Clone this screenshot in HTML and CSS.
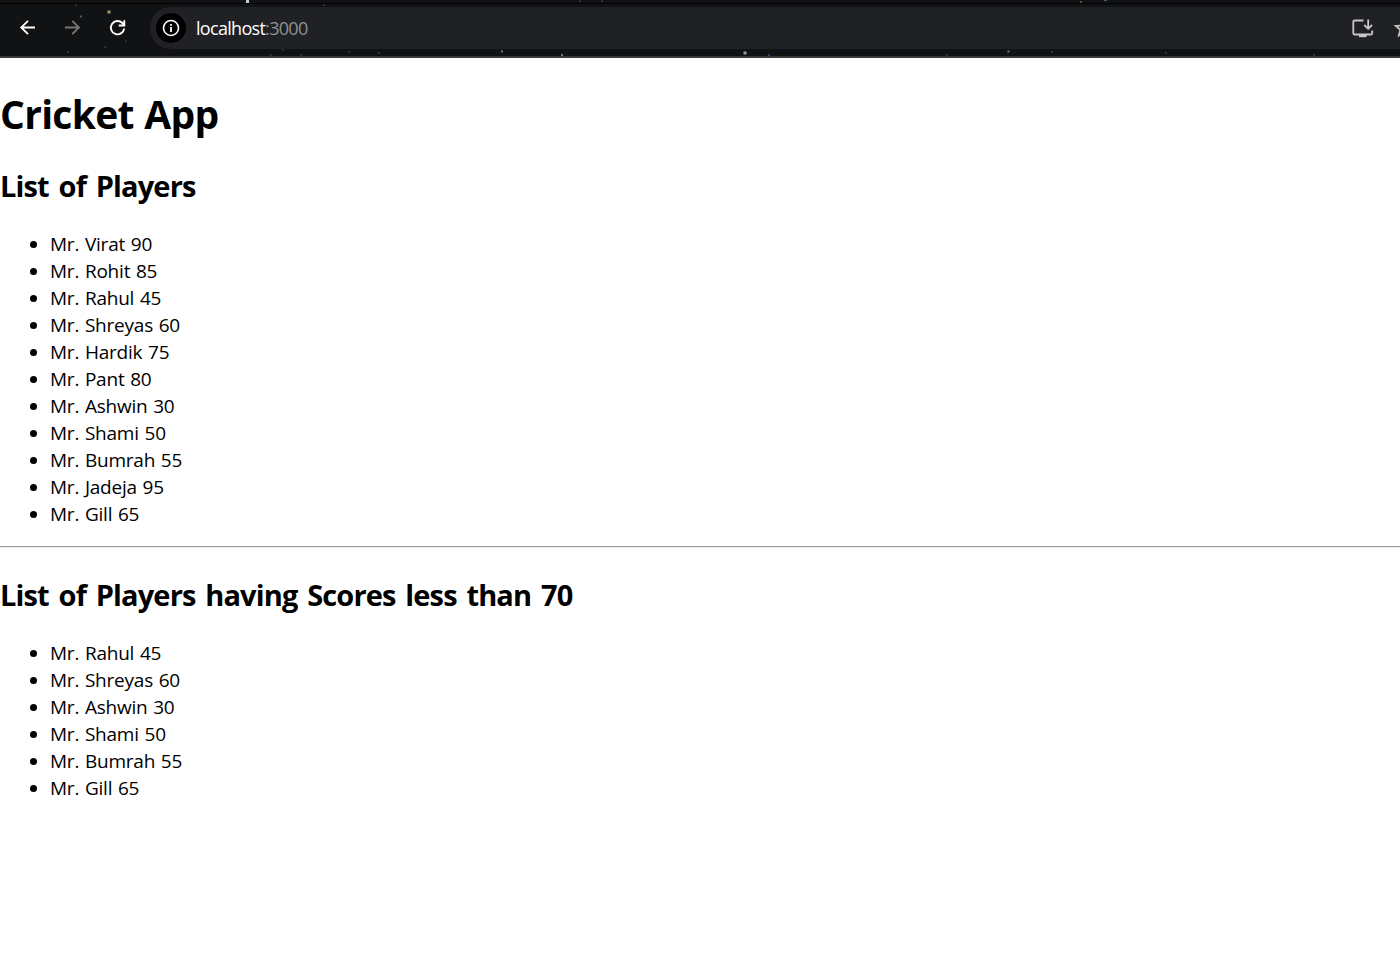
FILE: index.html
```html
<!DOCTYPE html>
<html lang="en">
<head>
<meta charset="utf-8">
<title>Cricket App</title>
<link rel="stylesheet" href="styles.css">
</head>
<body>
<header class="toolbar">
  <svg class="stars" width="1400" height="56" viewBox="0 0 1400 56" aria-hidden="true">
    <path d="M0 3.5H1400" stroke="#000"/>
    <path d="M246 0h3v3h-3z" fill="#c5cbd6"/>
    <path d="M107.500 10.500h3v3h-3z" fill="#a39c72"/>
    <path d="M80 15.500h2v2h-2z" fill="#505466"/>
    <path d="M75 4h2v2h-2zM125 40.500h2v2h-2zM67 51h2v2h-2zM104 46h2v2h-2zM323 4h2v2h-2zM579 0h2v2h-2zM601 0h2v2h-2zM282 49h2v2h-2zM270 54h2v2h-2zM300 54h2v2h-2zM348 51h2v2h-2zM378 52h2v2h-2zM1051 51h2v2h-2zM946 54h2v2h-2zM1165 52h2v2h-2zM1313 54h2v2h-2z" fill="#2e3133"/>
    <path d="M501 50.500h2v2h-2zM561 54h2v2h-2zM1007.500 50.500h2v2h-2z" fill="#70747c"/>
    <path d="M743.500 51.500h3v3h-3z" fill="#989ca7"/>
    <path d="M768 54.500h2v1.500h-2z" fill="#3e4880"/>
    <path d="M1080 1h2v2h-2z" fill="#63484a"/>
    <path d="M1104 0h3v1h-3z" fill="#555b75"/>
  </svg>
  <nav class="controls">
    <svg class="icon" width="24" height="24" viewBox="0 0 24 24"><path d="M20 11.500H6M13 4.800L6.200 11.500l6.800 6.700" fill="none" stroke="#fff" stroke-width="1.800"/></svg>
    <svg class="icon" width="24" height="24" viewBox="0 0 24 24"><path d="M5 11.500h14M12.200 4.800l6.800 6.700-6.800 6.700" fill="none" stroke="#777" stroke-width="1.800"/></svg>
    <svg class="icon" width="24" height="24" viewBox="0 0 24 24"><path d="M19.200 12.500A6.700 6.700 0 1 1 17.400 7L19.500 9M19.300 4.200V9.500H13.700" fill="none" stroke="#fff" stroke-width="1.900"/></svg>
  </nav>
  <div class="address">
    <span class="info"><svg class="icon" width="20" height="20" viewBox="0 0 20 20"><circle cx="10" cy="10" r="7.500" fill="none" stroke="#fff" stroke-width="1.600"/><path d="M10 9v5M10 6v1.800" stroke="#fff" stroke-width="1.800"/></svg></span>
    <span class="url">localhost<span class="port">:3000</span></span>
    <span class="actions">
      <svg class="icon" width="24" height="24" viewBox="0 0 24 24"><path d="M13.500 4.500H4.500a1.200 1.200 0 0 0-1.200 1.200v11.600a1.200 1.200 0 0 0 1.200 1.200h16.500a1.200 1.200 0 0 0 1.200-1.200v-2.800M18.200 3.500v9M14.300 9l3.900 3.800L22.100 9" fill="none" stroke="#c7c7c7" stroke-width="1.800"/><path d="M9 18h7.500v3.200H9z" fill="#c7c7c7"/></svg>
      <svg class="icon" width="24" height="24" viewBox="0 0 24 24"><path d="M12 4l2.300 5.400 5.900.5-4.500 3.800 1.400 5.700-5.100-3-5.100 3 1.400-5.700-4.500-3.800 5.900-.5z" fill="none" stroke="#c7c7c7" stroke-width="1.800"/></svg>
    </span>
  </div>
</header>
<main class="page">
  <h1 class="title">Cricket App</h1>
  <h2 class="heading">List of Players</h2>
  <ul class="players">
    <li>Mr. Virat 90</li>
    <li>Mr. Rohit 85</li>
    <li>Mr. Rahul 45</li>
    <li>Mr. Shreyas 60</li>
    <li>Mr. Hardik 75</li>
    <li>Mr. Pant 80</li>
    <li>Mr. Ashwin 30</li>
    <li>Mr. Shami 50</li>
    <li>Mr. Bumrah 55</li>
    <li>Mr. Jadeja 95</li>
    <li>Mr. Gill 65</li>
  </ul>
  <hr class="divider">
  <h2 class="heading">List of Players having Scores less than 70</h2>
  <ul class="players">
    <li>Mr. Rahul 45</li>
    <li>Mr. Shreyas 60</li>
    <li>Mr. Ashwin 30</li>
    <li>Mr. Shami 50</li>
    <li>Mr. Bumrah 55</li>
    <li>Mr. Gill 65</li>
  </ul>
</main>
</body>
</html>
```
FILE: styles.css
```css
* { box-sizing: border-box; }
body {
  margin: 0;
  background: #fff;
  color: #000;
  font-family: "Segoe UI", "Open Sans", "Noto Sans", sans-serif;
  overflow: hidden;
}
.icon { display: block; flex: none; }
.toolbar {
  position: relative;
  display: flex;
  height: 58px;
  padding-top: 7px;
  background: #101214;
  border-bottom: 2px solid #3c3838;
  overflow: hidden;
}
.stars { position: absolute; left: 0; top: 0; }
.controls {
  display: flex;
  align-items: center;
  gap: 21px;
  width: 150px;
  height: 42px;
  padding-left: 15px;
  flex: none;
}
.address {
  position: relative;
  display: flex;
  align-items: center;
  flex: 0 0 1300px;
  height: 42px;
  padding-left: 6px;
  border-radius: 21px;
  background: #202124;
}
.info {
  display: grid;
  place-items: center;
  width: 30px;
  height: 30px;
  border-radius: 50%;
  background: #000;
}
.url {
  margin-left: 10px;
  font-size: 18px;
  line-height: 24px;
  letter-spacing: -0.7px;
  color: #fff;
}
.port { color: #8d9195; }
.actions {
  display: flex;
  gap: 18px;
  margin-left: auto;
  margin-right: 34px;
}
.page { padding-top: 29px; }
.title {
  margin: 0 0 26px;
  font-size: 39px;
  line-height: 53px;
  font-weight: 700;
  letter-spacing: -0.7px;
  word-spacing: 1px;
}
.heading {
  margin: 0 0 25px;
  font-size: 29px;
  line-height: 40px;
  font-weight: 700;
  letter-spacing: -0.85px;
  word-spacing: 3px;
}
.players {
  margin: 0;
  padding-left: 50px;
  font-size: 19px;
  line-height: 27px;
  letter-spacing: -0.22px;
  word-spacing: 1px;
}
.divider {
  margin: 18px 0 27px;
  height: 2px;
  border: 0;
  border-top: 1px solid #9a9a9a;
  border-bottom: 1px solid #eee;
}
```
